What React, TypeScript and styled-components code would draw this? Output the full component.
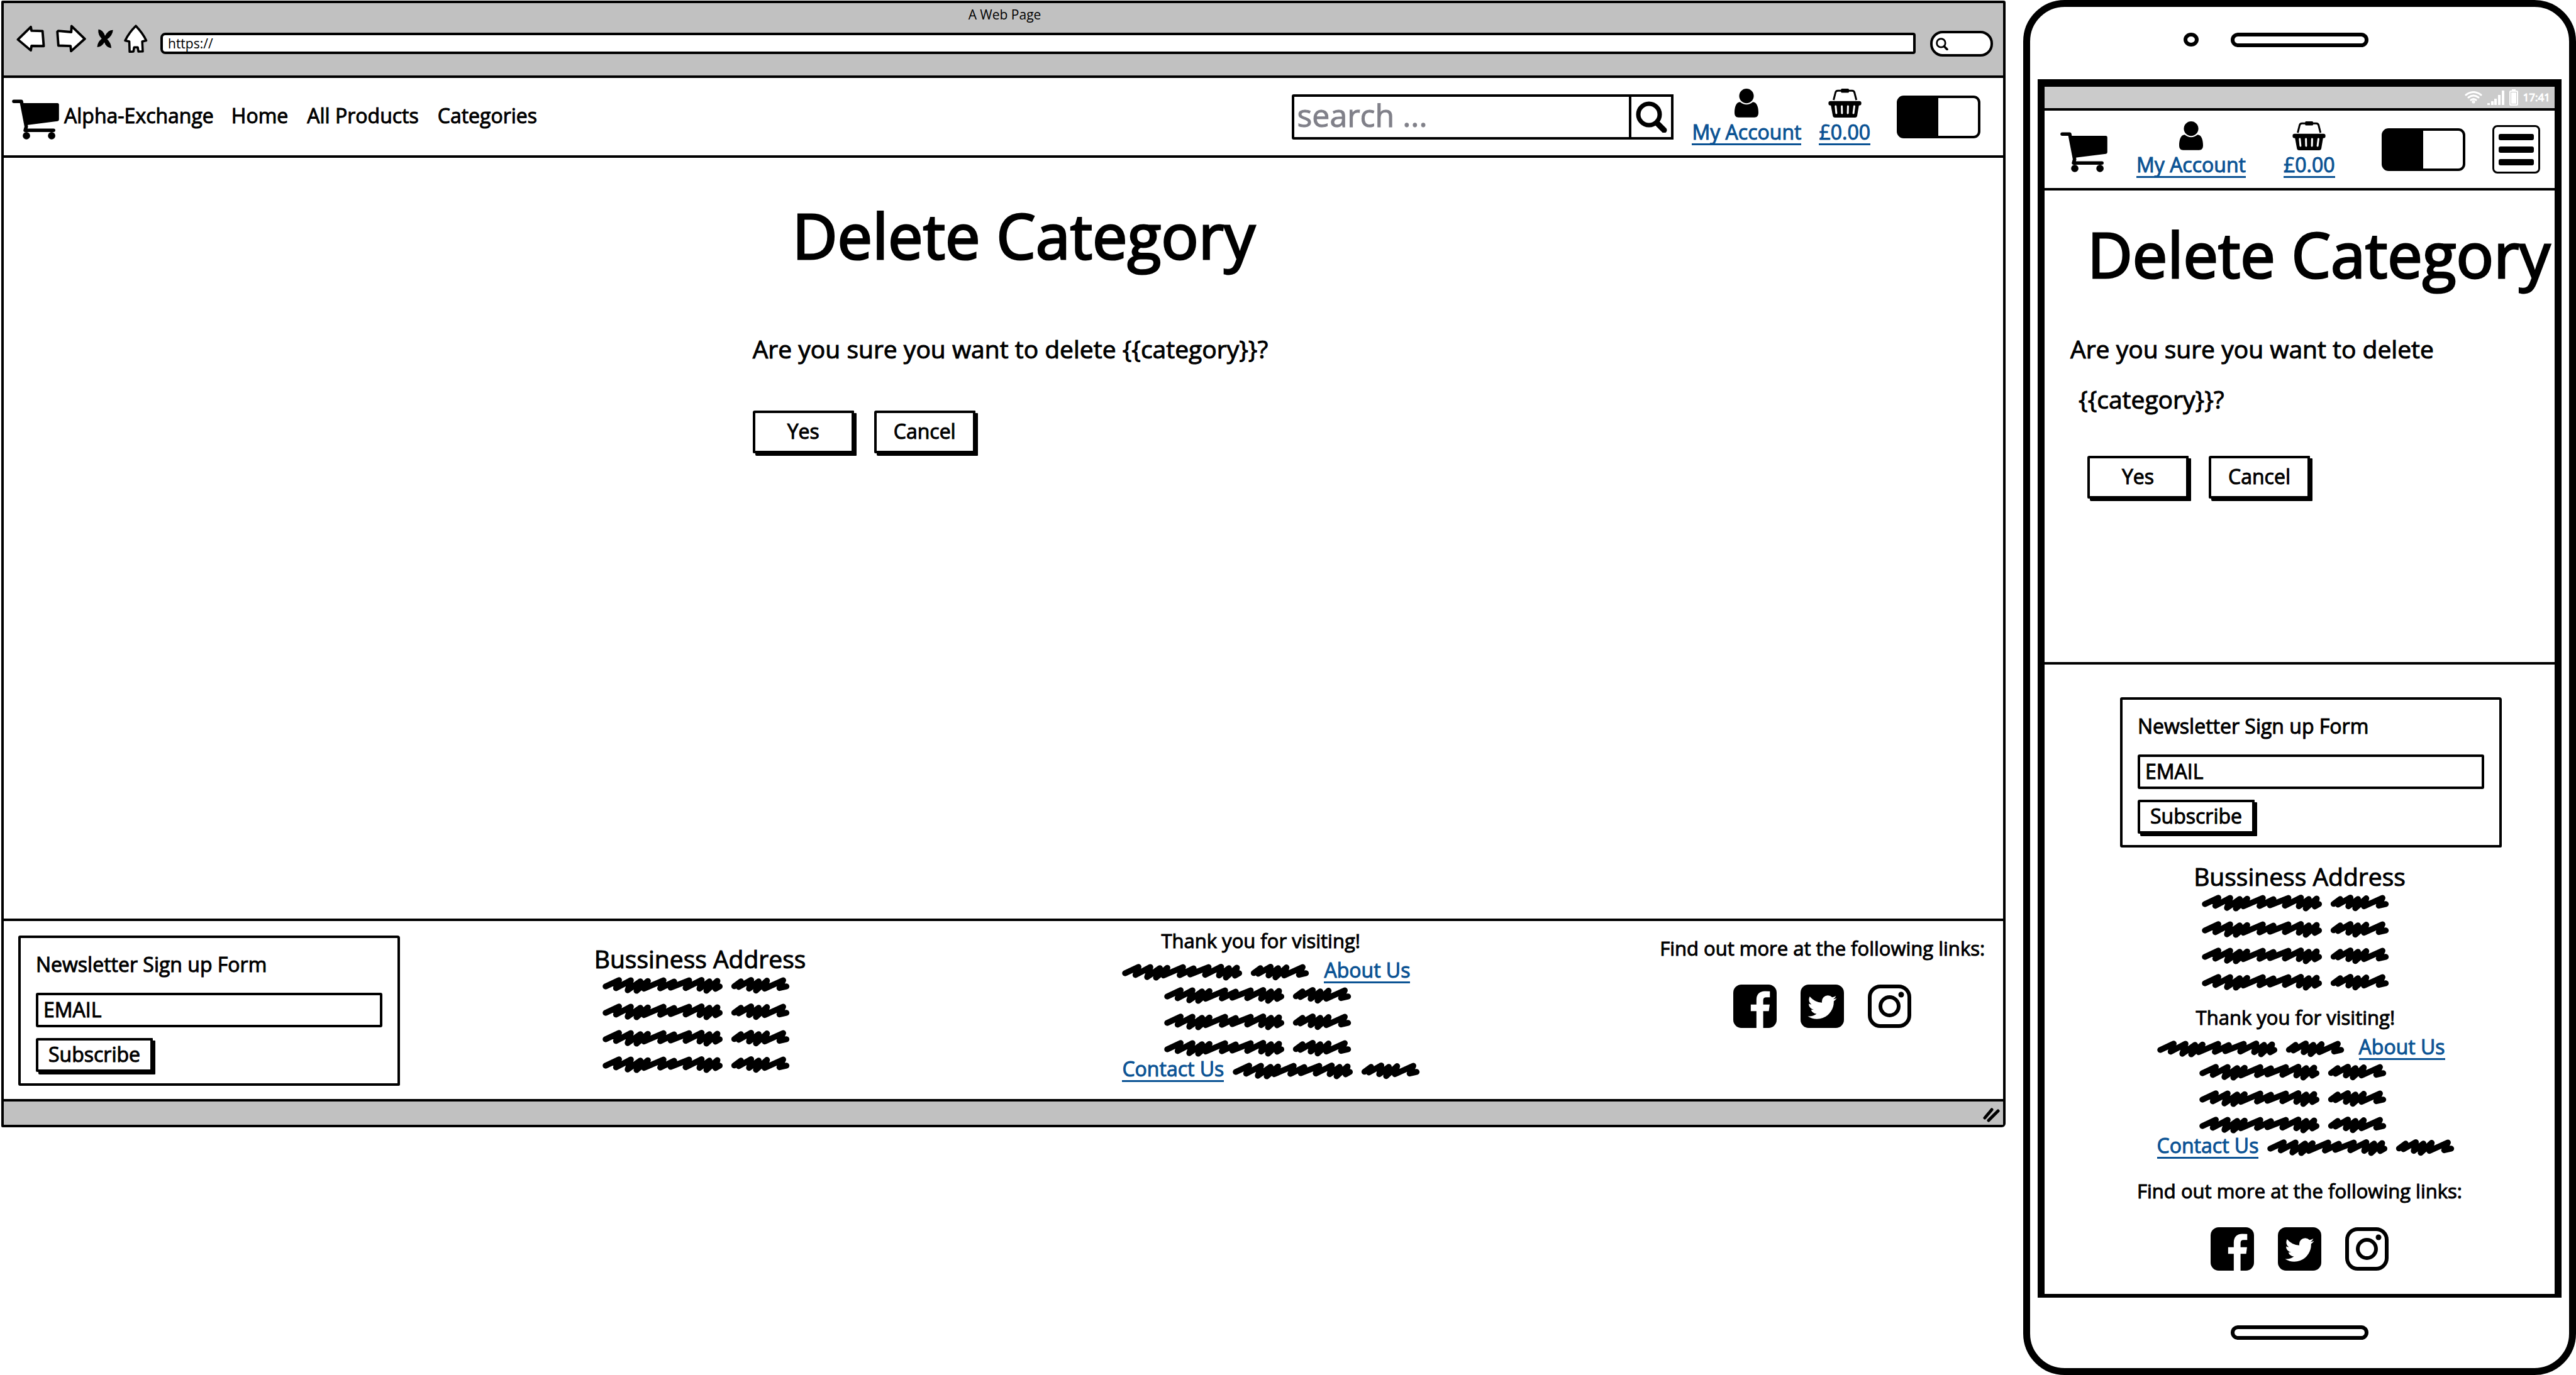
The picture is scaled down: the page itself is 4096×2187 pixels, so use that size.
import React, { useId } from "react";
import styled, { createGlobalStyle } from "styled-components";

const ink = "#000";
const chrome = "#c1c1c1";
const linkBlue = "#0b5394";
const noteSize = "31px";
const textSize = "32px";
const leadSize = "39px";

const GlobalStyle = createGlobalStyle`
  *, *::before, *::after { box-sizing: border-box; }
  body {
    margin: 0;
    background: #fff;
    color: ${ink};
    font-family: "Open Sans", "Noto Sans", sans-serif;
    font-size: ${textSize};
    line-height: 44px;
    -webkit-text-stroke-width: 1px;
  }
  button, input { font: inherit; color: inherit; margin: 0; }
  h1, h2, p, ul { margin: 0; padding: 0; }
  svg { display: block; flex: none; }
`;

/* ---------- drawings ---------- */

const Drawing = styled.svg<{ $w: number; $h: number }>`
  width: ${(p) => p.$w}px;
  height: ${(p) => p.$h}px;
  stroke-linejoin: round;
  stroke-linecap: round;
`;

const BackArrow = () => (
  <Drawing $w={46} $h={43} viewBox="94 82 168 154" fill="#fff" stroke={ink} strokeWidth="14">
    <path d="M103 164 L178 91 L182 113 L246 115 L253 202 L182 201 L178 227 Z" />
  </Drawing>
);
const ForwardArrow = () => (
  <Drawing $w={48} $h={45} viewBox="316 82 174 162" fill="#fff" stroke={ink} strokeWidth="14">
    <path d="M482 164 L406 91 L404 125 L330 118 L324 123 L330 203 L400 205 L403 235 Z" />
  </Drawing>
);
const StopCross = () => (
  <Drawing $w={26} $h={33} viewBox="562 94 98 118" fill={ink}>
    <path d="M571 97 Q598 98 611 136 Q630 100 659 101 Q655 137 624 156 Q647 178 649 210 Q617 206 607 175 Q594 201 564 204 Q565 175 591 153 Q567 128 571 97 Z" />
  </Drawing>
);
const HomeShape = () => (
  <Drawing $w={38} $h={45} viewBox="712 78 136 164" fill="#fff" stroke={ink} strokeWidth="13">
    <path d="M780 86 Q822 130 840 171 L817 176 L820 234 L795 235 L791 210 L770 210 L766 235 L744 236 L742 176 L718 171 Q740 125 780 86 Z" />
  </Drawing>
);
const CartShape = () => (
  <Drawing $w={75} $h={64} viewBox="69 509 268 230" fill={ink} stroke="none">
    <path d="M79 521 H122 L150 665 L144 686 H306" fill="none" stroke={ink} strokeWidth="20" />
    <path d="M126 531 H328 Q337 531 337 540 V624 Q337 633 328 634 L152 656 Z" />
    <circle cx="151" cy="717" r="21" />
    <circle cx="295" cy="717" r="21" />
  </Drawing>
);
const PersonShape = () => (
  <Drawing $w={38} $h={46} viewBox="345 55 138 167" fill={ink}>
    <circle cx="414" cy="97" r="42" />
    <path d="M377 132 Q414 162 451 132 C475 132 483 165 483 193 C483 212 475 221 460 221 H368 C353 221 345 212 345 193 C345 165 353 132 377 132 Z" />
  </Drawing>
);
const BasketShape = () => (
  <Drawing $w={53} $h={46} viewBox="870 53 192 169" fill={ink}>
    <path d="M900 120 L911 76 Q914 65 925 65 H1008 Q1019 65 1022 76 L1033 120" fill="none" stroke={ink} strokeWidth="11" strokeLinecap="butt" />
    <rect x="943" y="53" width="47" height="24" rx="6" />
    <rect x="870" y="126" width="192" height="25" rx="12" />
    <path d="M883 145 H1049 L1038 210 Q1036 222 1025 222 H908 Q897 222 895 210 Z" />
    <path d="M912 156 L916 196 M948 156 L949 196 M984 156 L983 196 M1021 156 L1016 196" stroke="#fff" strokeWidth="11" />
  </Drawing>
);
const Magnifier = ({ size }: { size: number }) => (
  <Drawing $w={size} $h={size} viewBox="0 0 50 50" fill="none" stroke={ink}>
    <circle cx="21" cy="21" r="17" strokeWidth="7" />
    <path d="M34 35 L45 46" strokeWidth="9" />
  </Drawing>
);
const Scribble = () => (
  <Drawing $w={298} $h={28} viewBox="42 29 1078 98" fill="none" stroke={ink} strokeWidth="34">
    <path d="M60 85 L137 49 L120 95 L205 50 L187 107 L260 56 L238 110 L303 54 L281 98 L393 50 L374 96 L454 57 L434 92 L540 50 L520 94 L612 48 L600 98 L657 56 L640 110 L703 53 L692 99 L716 85" />
    <path d="M800 84 L838 56 L826 88 L897 48 L885 98 L940 56 L925 109 L988 52 L975 98 L1081 50 L1060 94 L1100 85" />
    <path d="M205 65 H300 L285 95 L240 102 L198 95 Z M608 65 H702 L700 92 L645 102 L605 90 Z M890 65 H982 L972 92 L930 102 L886 90 Z M430 75 L455 65 L440 88 Z" fill={ink} stroke="none" />
  </Drawing>
);
const GripShape = () => (
  <Drawing $w={28} $h={24} viewBox="0 0 28 24" fill="none" stroke={ink} strokeWidth="5">
    <path d="M4 17 L15 4 M10 21 L25 6" />
  </Drawing>
);
const WifiShape = () => (
  <Drawing $w={28} $h={20} viewBox="0 0 28 20" fill="none" stroke="#fff" strokeWidth="3">
    <path d="M2 6 Q14 -3 26 6 M6 10 Q14 4 22 10 M10 14 Q14 11 18 14" />
    <circle cx="14" cy="17" r="1" />
  </Drawing>
);
const SignalShape = () => (
  <Drawing $w={27} $h={23} viewBox="0 0 27 23" fill="#fff">
    <path d="M0 20h4v3h-4z M6 17h4v6h-4z M11 13h4v10h-4z M17 7h4v16h-4z M23 0h4v23h-4z" />
  </Drawing>
);
const BatteryShape = () => (
  <Drawing $w={14} $h={26} viewBox="0 0 14 26" fill="#fff">
    <path fillRule="evenodd" d="M4 0h6v2h2q2 0 2 2v20q0 2 -2 2h-10q-2 0 -2 -2v-20q0 -2 2 -2h2z M2 4v20h10v-20z" />
    <path d="M3 5h8v18h-8z" />
  </Drawing>
);
const FacebookShape = () => (
  <Drawing $w={69} $h={69} viewBox="128 128 1536 1536" fill={ink}>
    <path d="M1376 128q119 0 203.5 84.5t84.5 203.5v960q0 119-84.5 203.5t-203.5 84.5h-188v-595h199l30-232h-229v-148q0-56 23.5-84t91.5-28l122-1v-207q-63-9-178-9-136 0-217.5 80t-81.5 226v171h-200v232h200v595h-532q-119 0-203.5-84.5t-84.5-203.5v-960q0-119 84.5-203.5t203.5-84.5h960z" />
  </Drawing>
);
const TwitterShape = () => (
  <Drawing $w={69} $h={69} viewBox="128 128 1536 1536" fill={ink}>
    <path d="M1408 610q-56 25-121 34 68-40 93-117-65 38-134 51-61-66-153-66-87 0-148.5 61.5t-61.5 148.5q0 29 5 48-129-7-242-65t-192-155q-29 50-29 106 0 114 91 175-47-1-100-26v2q0 75 50 133.5t123 72.5q-29 8-51 8-13 0-39-4 21 63 74.5 104t121.5 42q-116 90-261 90-26 0-50-3 148 94 322 94 112 0 210-35.5t168-95 120.5-137 75-162 24.5-168.5q0-18-1-27 63-45 105-109zm256-194v960q0 119-84.5 203.5t-203.5 84.5h-960q-119 0-203.5-84.5t-84.5-203.5v-960q0-119 84.5-203.5t203.5-84.5h960q119 0 203.5 84.5t84.5 203.5z" />
  </Drawing>
);
const InstagramShape = () => (
  <Drawing $w={69} $h={69} viewBox="0 0 69 69" fill="none" stroke={ink} strokeWidth="6">
    <rect x="3" y="3" width="63" height="63" rx="17" />
    <circle cx="34.5" cy="34.5" r="14.5" />
    <circle cx="53" cy="16" r="4.5" fill={ink} stroke="none" />
  </Drawing>
);

/* ---------- shared controls ---------- */

const IconButton = styled.button`
  display: grid;
  place-items: center;
  padding: 0;
  border: 0;
  background: none;
`;

const SketchButton = styled.button<{ $compact?: boolean }>`
  min-width: ${(p) => (p.$compact ? "186px" : "161px")};
  height: ${(p) => (p.$compact ? "54px" : "68px")};
  padding: 0 10px 3px;
  border: 4px solid ${ink};
  border-radius: 3px 1px 1px 2px;
  background: #fff;
  box-shadow: 4px 4px 0 ${ink};
  line-height: 40px;
`;

const TextLink = styled.a`
  display: block;
  color: ${linkBlue};
  line-height: 37px;
  border-bottom: 3px solid ${linkBlue};
  text-decoration: none;
  white-space: nowrap;
`;

const IconLink = styled.a`
  display: flex;
  flex-direction: column;
  align-items: center;
  justify-self: start;
  gap: 4px;
  color: ${linkBlue};
  text-decoration: none;
  white-space: nowrap;
`;
const IconLinkText = styled.span`
  line-height: 37px;
  border-bottom: 3px solid ${linkBlue};
`;

const Toggle = styled.input`
  appearance: none;
  width: 133px;
  height: 68px;
  border: 4px solid ${ink};
  border-radius: 11px;
  background: linear-gradient(to right, ${ink} 50%, #fff 50%);
`;

const AccountLink = () => (
  <IconLink href="#account">
    <PersonShape />
    <IconLinkText>My Account</IconLinkText>
  </IconLink>
);
const BasketLink = () => (
  <IconLink href="#basket">
    <BasketShape />
    <IconLinkText>£0.00</IconLinkText>
  </IconLink>
);

/* ---------- footer blocks ---------- */

const NewsletterForm = styled.form<{ $shift?: number }>`
  width: 607px;
  height: 239px;
  margin-left: ${(p) => p.$shift ?? 0}px;
  padding: 20px 24px 0;
  border: 4px solid ${ink};
  border-radius: 3px 4px 2px 3px;
`;
const EmailLabel = styled.label`
  display: block;
  line-height: 44px;
  white-space: nowrap;
`;
const EmailInput = styled.input`
  display: block;
  width: 100%;
  height: 55px;
  margin: 23px 0 17px;
  padding: 0 8px 2px;
  border: 4px solid ${ink};
  border-radius: 3px;
  background: #fff;
`;

function Newsletter({ shift }: { shift?: number }) {
  const id = useId();
  return (
    <NewsletterForm $shift={shift} onSubmit={(e) => e.preventDefault()}>
      <EmailLabel htmlFor={id}>Newsletter Sign up Form</EmailLabel>
      <EmailInput id={id} type="text" defaultValue="EMAIL" />
      <SketchButton $compact type="submit">Subscribe</SketchButton>
    </NewsletterForm>
  );
}

const Stack = styled.div<{ $indent?: number; $gap?: number; $top?: number }>`
  display: flex;
  flex-direction: column;
  gap: ${(p) => p.$gap ?? 14}px;
  padding-top: ${(p) => p.$top ?? 0}px;
  padding-left: ${(p) => p.$indent ?? 0}px;
`;
const AddressHeading = styled.h2`
  font-size: ${leadSize};
  font-weight: 400;
  line-height: 52px;
  white-space: nowrap;
`;
const Address = () => (
  <Stack $gap={2}>
    <AddressHeading>Bussiness Address</AddressHeading>
    <Stack $indent={13}>
      <Scribble /><Scribble /><Scribble /><Scribble />
    </Stack>
  </Stack>
);

const ThanksText = styled.p`
  padding: 0 0 6px 62px;
  font-size: ${noteSize};
  white-space: nowrap;
`;
const LinkRow = styled.div<{ $gap: number }>`
  display: flex;
  align-items: flex-end;
  gap: ${(p) => p.$gap}px;
  svg { margin-bottom: 4px; }
`;
const ThanksBlock = styled(Stack)<{ $shift?: number }>`
  margin-left: ${(p) => p.$shift ?? 0}px;
`;
const Thanks = ({ shift }: { shift?: number }) => (
  <ThanksBlock $gap={0} $shift={shift}>
    <ThanksText>Thank you for visiting!</ThanksText>
    <LinkRow $gap={23}>
      <Scribble />
      <TextLink href="#about">About Us</TextLink>
    </LinkRow>
    <Stack $indent={67} $top={5}>
      <Scribble /><Scribble /><Scribble />
    </Stack>
    <LinkRow $gap={14}>
      <TextLink href="#contact">Contact Us</TextLink>
      <Scribble />
    </LinkRow>
  </ThanksBlock>
);

const SocialBlock = styled.div`
  display: flex;
  flex-direction: column;
  align-items: center;
  gap: 36px;
  font-size: ${noteSize};
  white-space: nowrap;
`;
const SocialLinks = styled.div`
  display: flex;
  gap: 38px;
`;
const Social = () => (
  <SocialBlock>
    <p>Find out more at the following links:</p>
    <SocialLinks>
      <a href="#facebook" aria-label="Facebook"><FacebookShape /></a>
      <a href="#twitter" aria-label="Twitter"><TwitterShape /></a>
      <a href="#instagram" aria-label="Instagram"><InstagramShape /></a>
    </SocialLinks>
  </SocialBlock>
);

/* ---------- page heading and question ---------- */

const Title = styled.h1`
  font-size: 99px;
  font-weight: 400;
  line-height: 120px;
  white-space: nowrap;
  -webkit-text-stroke-width: 3px;
`;
const ButtonRow = styled.div`
  display: flex;
  gap: 32px;
`;

/* ---------- desktop browser ---------- */

const Page = styled.div`
  display: grid;
  grid-template-columns: minmax(0, 3187fr) minmax(0, 879fr);
  column-gap: 28px;
  align-items: start;
  min-height: 100vh;
  padding-left: 2px;
`;

const Browser = styled.section`
  margin-top: 1px;
  border: 4px solid ${ink};
  border-radius: 2px 3px 6px 2px;
`;
const TitleBar = styled.header`
  padding: 2px 16px 30px 20px;
  background: ${chrome};
  border-bottom: 4px solid ${ink};
  -webkit-text-stroke-width: 0;
`;
const WindowTitle = styled.p`
  font-size: 21px;
  line-height: 32px;
  text-align: center;
`;
const Toolbar = styled.div`
  display: flex;
  align-items: flex-end;
`;
const ToolButtons = styled.div`
  display: flex;
  align-items: center;
  gap: 17px;
  margin: 0 20px 6px 0;
`;
const UrlInput = styled.input`
  flex: 1;
  min-width: 0;
  height: 34px;
  margin: 0 23px 4px 0;
  padding: 0 8px;
  border: 4px solid ${ink};
  border-radius: 8px 4px 4px 8px;
  background: #fff;
  font-size: 21px;
`;
const Pill = styled.label`
  display: flex;
  align-items: center;
  gap: 4px;
  width: 100px;
  height: 41px;
  padding-left: 5px;
  border: 4px solid ${ink};
  border-radius: 20px;
  background: #fff;
`;
const PillInput = styled.input`
  width: 60px;
  border: 0;
  padding: 0;
  background: none;
  font-size: 21px;
  line-height: 24px;
`;

const NavBar = styled.nav`
  display: flex;
  align-items: center;
  height: 127px;
  padding: 0 36px 0 13px;
  border-bottom: 4px solid ${ink};
`;
const Brand = styled.a`
  padding: 0 28px 4px 8px;
  color: ${ink};
  text-decoration: none;
  white-space: nowrap;
`;
const NavLinks = styled.div`
  display: flex;
  gap: 30px;
  margin-right: auto;
  padding-bottom: 4px;
  a { color: ${ink}; text-decoration: none; white-space: nowrap; }
`;
const CartLink = styled.a`
  padding-top: 8px;
`;
const SearchForm = styled.form`
  display: flex;
  width: 607px;
  height: 72px;
  margin-right: 29px;
`;
const SearchInput = styled.input`
  flex: 1;
  min-width: 0;
  padding: 0 4px 6px;
  border: 4px solid ${ink};
  border-radius: 3px 0 0 3px;
  background: #fff;
  font-size: 50px;
  &::placeholder { color: #808089; opacity: 1; }
`;
const SearchButton = styled(IconButton)`
  width: 71px;
  margin-left: -4px;
  border: 4px solid ${ink};
`;
const NavTools = styled.div`
  display: flex;
  align-items: center;
  gap: 28px;
  ${Toggle} { margin-left: 14px; }
`;

const DesktopMain = styled.main`
  display: flex;
  flex-direction: column;
  align-items: center;
  min-height: 1210px;
  padding: 63px 0 0 22px;
`;
const Question = styled.div`
  h1 { padding-left: 63px; }
  p { margin: 93px 0 70px; font-size: ${leadSize}; line-height: 56px; white-space: nowrap; }
`;
const DesktopFooter = styled.footer`
  display: grid;
  grid-template-columns: minmax(0, 916fr) minmax(0, 840fr) minmax(0, 855fr) minmax(0, 520fr);
  justify-items: start;
  min-height: 291px;
  padding: 0 26px 20px 23px;
  border: solid ${ink};
  border-width: 4px 0;
`;
const FooterCell = styled.div<{ $top: number }>`
  padding-top: ${(p) => p.$top}px;
`;
const StatusBar = styled.div`
  display: flex;
  justify-content: flex-end;
  height: 37px;
  padding: 9px 5px 0;
  background: ${chrome};
`;

/* ---------- phone ---------- */

const Phone = styled.section`
  display: flex;
  flex-direction: column;
  min-height: 100vh;
  padding: 0 12px;
  border: 11px solid ${ink};
  border-radius: 66px;
`;
const PhoneTop = styled.div`
  display: grid;
  grid-template-columns: 1fr auto 1fr;
  column-gap: 51px;
  height: 115px;
  padding-top: 41px;
`;
const Camera = styled.span`
  justify-self: end;
  width: 24px;
  height: 22px;
  border: 6px solid ${ink};
  border-radius: 50%;
`;
const Slot = styled.span`
  width: 219px;
  height: 23px;
  border: 6px solid ${ink};
  border-radius: 14px;
`;
const PhoneBottom = styled.div`
  display: flex;
  justify-content: center;
  height: 112px;
  padding-top: 44px;
`;
const Screen = styled.div`
  flex: 1;
  border: solid ${ink};
  border-width: 12px 11px 6px;
`;
const PhoneStatus = styled.div`
  display: flex;
  align-items: center;
  justify-content: flex-end;
  gap: 8px;
  height: 38px;
  padding-right: 7px;
  border-bottom: 4px solid ${ink};
  background: #cbcbcb;
  color: #fff;
  font-size: 17px;
  line-height: 24px;
`;
const PhoneNav = styled.nav`
  display: grid;
  grid-template-columns: 121fr 234fr 156fr 176fr 76px;
  align-items: center;
  height: 127px;
  padding: 0 23px 0 25px;
  border-bottom: 4px solid ${ink};
`;
const MenuButton = styled.button`
  display: flex;
  flex-direction: column;
  justify-content: center;
  gap: 10px;
  width: 76px;
  height: 77px;
  padding: 0 7px;
  border: 3px solid ${ink};
  border-radius: 8px;
  background: #fff;
`;
const MenuLine = styled.span`
  display: block;
  height: 10px;
  border-radius: 3px;
  background: ${ink};
`;
const PhoneMain = styled.main`
  min-height: 750px;
  padding: 41px 0 0 41px;
  h1 { padding-left: 27px; }
`;
const PhoneQuestion = styled.p`
  margin: 51px 0 50px;
  font-size: ${leadSize};
  line-height: 80px;
`;
const PhoneQuestionSubject = styled.span`
  display: block;
  padding-left: 13px;
`;
const PhoneButtons = styled(ButtonRow)`
  padding-left: 27px;
`;
const PhoneFooter = styled.footer`
  display: flex;
  flex-direction: column;
  align-items: center;
  gap: 20px;
  padding: 52px 0 20px;
  border-top: 4px solid ${ink};
`;
const PhoneSocial = styled.div`
  padding-top: 9px;
`;

function DesktopWindow() {
  return (
    <Browser>
      <TitleBar>
        <WindowTitle>A Web Page</WindowTitle>
        <Toolbar>
          <ToolButtons>
            <IconButton aria-label="Back"><BackArrow /></IconButton>
            <IconButton aria-label="Forward"><ForwardArrow /></IconButton>
            <IconButton aria-label="Stop"><StopCross /></IconButton>
            <IconButton aria-label="Home"><HomeShape /></IconButton>
          </ToolButtons>
          <UrlInput aria-label="Address" type="text" defaultValue="https://" />
          <Pill>
            <Magnifier size={20} />
            <PillInput type="search" aria-label="Web search" />
          </Pill>
        </Toolbar>
      </TitleBar>
      <NavBar>
        <CartLink href="#home" aria-label="Cart"><CartShape /></CartLink>
        <Brand href="#home">Alpha-Exchange</Brand>
        <NavLinks>
          <a href="#home">Home</a>
          <a href="#products">All Products</a>
          <a href="#categories">Categories</a>
        </NavLinks>
        <SearchForm onSubmit={(e) => e.preventDefault()}>
          <SearchInput type="text" aria-label="Search" placeholder="search ..." />
          <SearchButton type="submit" aria-label="Search"><Magnifier size={50} /></SearchButton>
        </SearchForm>
        <NavTools>
          <AccountLink />
          <BasketLink />
          <Toggle type="checkbox" role="switch" aria-label="Theme" />
        </NavTools>
      </NavBar>
      <DesktopMain>
        <Question>
          <Title>Delete Category</Title>
          <p>Are you sure you want to delete {"{{category}}?"}</p>
          <ButtonRow>
            <SketchButton>Yes</SketchButton>
            <SketchButton>Cancel</SketchButton>
          </ButtonRow>
        </Question>
      </DesktopMain>
      <DesktopFooter>
        <FooterCell $top={23}><Newsletter /></FooterCell>
        <FooterCell $top={34}><Address /></FooterCell>
        <FooterCell $top={9}><Thanks /></FooterCell>
        <FooterCell $top={21}><Social /></FooterCell>
      </DesktopFooter>
      <StatusBar><GripShape /></StatusBar>
    </Browser>
  );
}

function PhoneMock() {
  return (
    <Phone>
      <PhoneTop><Camera /><Slot /></PhoneTop>
      <Screen>
        <PhoneStatus>
          <WifiShape />
          <SignalShape />
          <BatteryShape />
          <span>17:41</span>
        </PhoneStatus>
        <PhoneNav>
          <CartLink href="#home" aria-label="Cart"><CartShape /></CartLink>
          <AccountLink />
          <BasketLink />
          <Toggle type="checkbox" role="switch" aria-label="Theme" />
          <MenuButton aria-label="Menu"><MenuLine /><MenuLine /><MenuLine /></MenuButton>
        </PhoneNav>
        <PhoneMain>
          <Title>Delete Category</Title>
          <PhoneQuestion>
            Are you sure you want to delete{" "}
            <PhoneQuestionSubject>{"{{category}}?"}</PhoneQuestionSubject>
          </PhoneQuestion>
          <PhoneButtons>
            <SketchButton>Yes</SketchButton>
            <SketchButton>Cancel</SketchButton>
          </PhoneButtons>
        </PhoneMain>
        <PhoneFooter>
          <Newsletter shift={36} />
          <Address />
          <Thanks shift={20} />
          <PhoneSocial><Social /></PhoneSocial>
        </PhoneFooter>
      </Screen>
      <PhoneBottom><Slot /></PhoneBottom>
    </Phone>
  );
}

export default function App() {
  return (
    <>
      <GlobalStyle />
      <Page>
        <DesktopWindow />
        <PhoneMock />
      </Page>
    </>
  );
}
